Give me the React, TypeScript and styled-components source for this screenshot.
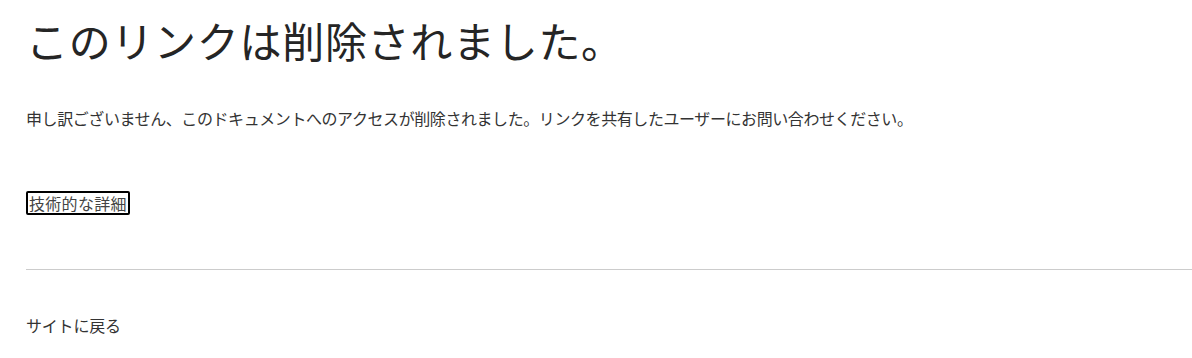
import React from "react";
import styled, { createGlobalStyle } from "styled-components";

const GlobalStyle = createGlobalStyle`
  html, body {
    margin: 0;
    padding: 0;
    background: #ffffff;
  }
  body {
    font-family: "Noto Sans CJK JP", "Noto Sans", sans-serif;
    color: #333333;
  }
`;

const Page = styled.main`
  display: flex;
  flex-direction: column;
  padding: 0 0 0 26px;
`;

const Title = styled.h1`
  margin: 10px 0 0 0;
  font-size: 42px;
  font-weight: 400;
  line-height: 60px;
  color: #252525;
  letter-spacing: 0.7px;
`;

const Message = styled.p`
  margin: 36px 0 0 0;
  font-size: 16px;
  line-height: 24px;
  font-weight: 400;
  color: #333333;
  letter-spacing: -0.42px;
`;

const DetailsButton = styled.button`
  align-self: flex-start;
  margin: 61px 0 0 0;
  padding: 0 1px;
  border: 2px solid #000000;
  border-radius: 2px;
  background: transparent;
  font-family: inherit;
  font-size: 16px;
  line-height: 20px;
  color: #444444;
  letter-spacing: 0.3px;
  cursor: pointer;
`;

const Divider = styled.hr`
  margin: 54px 0 0 0;
  border: none;
  border-top: 1px solid #cccccc;
  height: 0;
`;

const BackLink = styled.a`
  margin: 43px 0 0 0;
  font-size: 16px;
  line-height: 24px;
  color: #333333;
  text-decoration: none;
  letter-spacing: -0.2px;
  align-self: flex-start;
`;

export default function App() {
  return (
    <>
      <GlobalStyle />
      <Page>
        <Title>このリンクは削除されました。</Title>
        <Message>
          申し訳ございません、このドキュメントへのアクセスが削除されました。リンクを共有したユーザーにお問い合わせください。
        </Message>
        <DetailsButton type="button">技術的な詳細</DetailsButton>
        <Divider />
        <BackLink href="#">サイトに戻る</BackLink>
      </Page>
    </>
  );
}
